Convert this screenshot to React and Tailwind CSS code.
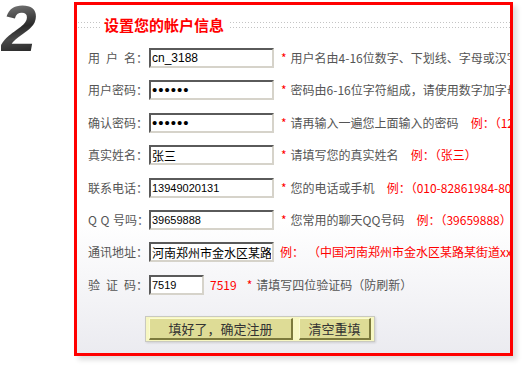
import React from 'react';

const cjk = "font-['Noto_Sans_CJK_SC',sans-serif]";
const inputBase =
  "h-[20px] shrink-0 bg-white border-2 border-t-[#5a5a5a] border-l-[#5a5a5a] border-r-[#d6d3ca] border-b-[#d6d3ca] px-[1px] text-black outline-none";

const Gap = () => <span className="inline-block w-[6px]" />;

const Star = () => <span className="ml-[7px] text-[#f00]">*</span>;

const Example = ({ children, className = 'ml-[12px]' }) => (
  <span className={`${className} text-[#f00]`}>{children}</span>
);

export default function App() {
  const rows = [
    {
      label: <>用<Gap />户<Gap />名：</>,
      input: <input className={`${inputBase} w-[125px] font-['Liberation_Sans',sans-serif] text-[12px]`} defaultValue="cn_3188" />,
      rest: (
        <>
          <Star />
          <span className="ml-[4px]">用户名由4-16位数字、下划线、字母或汉字组成</span>
        </>
      ),
    },
    {
      label: <>用户密码：</>,
      input: <input type="password" className={`${inputBase} w-[125px] font-['Liberation_Sans',sans-serif] text-[15px] tracking-[1px] text-[#0a1450]`} defaultValue="123456" />,
      rest: (
        <>
          <Star />
          <span className="ml-[4px]">密码由6-16位字符組成，请使用数字加字母组合</span>
        </>
      ),
    },
    {
      label: <>确认密码：</>,
      input: <input type="password" className={`${inputBase} w-[125px] font-['Liberation_Sans',sans-serif] text-[15px] tracking-[1px] text-[#0a1450]`} defaultValue="123456" />,
      rest: (
        <>
          <Star />
          <span className="ml-[4px]">请再输入一遍您上面输入的密码</span>
          <Example>例：（123456）</Example>
        </>
      ),
    },
    {
      label: <>真实姓名：</>,
      input: <input className={`${inputBase} w-[125px] ${cjk} text-[12px]`} defaultValue="张三" />,
      rest: (
        <>
          <Star />
          <span className="ml-[4px]">请填写您的真实姓名</span>
          <Example>例：（张三）</Example>
        </>
      ),
    },
    {
      label: <>联系电话：</>,
      input: <input className={`${inputBase} w-[125px] font-['Liberation_Sans',sans-serif] text-[11px]`} defaultValue="13949020131" />,
      rest: (
        <>
          <Star />
          <span className="ml-[4px]">您的电话或手机</span>
          <Example>例：（010-82861984-8001）</Example>
        </>
      ),
    },
    {
      label: <>Q<Gap />Q<Gap />号吗：</>,
      input: <input className={`${inputBase} w-[125px] font-['Liberation_Sans',sans-serif] text-[11px]`} defaultValue="39659888" />,
      rest: (
        <>
          <Star />
          <span className="ml-[4px]">您常用的聊天QQ号码</span>
          <Example>例：（39659888）</Example>
        </>
      ),
    },
    {
      label: <>通讯地址：</>,
      input: <input className={`${inputBase} w-[125px] ${cjk} text-[12px]`} defaultValue="河南郑州市金水区某路某街道xx号" />,
      rest: (
        <>
          <Example className="ml-[6px]">例：</Example>
          <Example className="ml-[4px]">（中国河南郑州市金水区某路某街道xx号）</Example>
        </>
      ),
    },
    {
      label: <>验<Gap />证<Gap />码：</>,
      input: <input className={`${inputBase} w-[55px] font-['Liberation_Sans',sans-serif] text-[11px]`} defaultValue="7519" />,
      rest: (
        <>
          <span className="ml-[6px] text-[#f00]">7519</span>
          <span className="ml-[10px] text-[#f00]">*</span>
          <span className="ml-[4px]">请填写四位验证码（防刷新）</span>
        </>
      ),
    },
  ];

  return (
    <div className={`w-[523px] h-[366px] bg-white flex ${cjk} text-[12px] text-[#555]`}>
      {/* big step number */}
      <div className="w-[74px] shrink-0">
        <div className="ml-[1px] pr-[14px] text-[64px] leading-[58px] font-black italic font-['Liberation_Sans',sans-serif] bg-[linear-gradient(170deg,#8a8a8a_0%,#2a2a2a_45%,#4a4a4a_62%,#111_100%)] bg-clip-text text-transparent w-fit">
          2
        </div>
      </div>

      {/* form panel */}
      <div className="mt-[2px] w-[439px] h-[354px] border-[3px] border-[#f00] bg-[linear-gradient(to_bottom,#fff_0%,#fff_62%,#ebebf0_100%)] shadow-[4px_4px_5px_rgba(0,0,0,0.13)] overflow-hidden">
        <div className="flex items-center mt-[10px] pl-[1px]">
          <div className="w-[22px] h-[6px] flex flex-col justify-between">
            <div className="h-px bg-[linear-gradient(to_right,#c4c4c4_1px,transparent_1px)] bg-[length:3px_1px]" />
            <div className="h-px bg-[linear-gradient(to_right,#c4c4c4_1px,transparent_1px)] bg-[length:3px_1px]" />
          </div>
          <div className="ml-[4px] text-[15px] leading-[20px] font-bold text-[#f00]">设置您的帐户信息</div>
          <div className="ml-[6px] flex-1 h-[6px] flex flex-col justify-between">
            <div className="h-px bg-[linear-gradient(to_right,#c4c4c4_1px,transparent_1px)] bg-[length:3px_1px]" />
            <div className="h-px bg-[linear-gradient(to_right,#c4c4c4_1px,transparent_1px)] bg-[length:3px_1px]" />
          </div>
        </div>

        <div className="mt-[13px] pl-[11px] flex flex-col gap-[12.4px]">
          {rows.map((r, i) => (
            <div key={i} className="flex items-center h-[20px] whitespace-nowrap">
              <div className="w-[61px] shrink-0 flex">{r.label}</div>
              {r.input}
              {r.rest}
            </div>
          ))}
        </div>

        <div className="mt-[21px] ml-[68px] w-fit flex gap-[6px] bg-[#f7f7c2] border border-[#c9c9c0] px-[3px] py-[1px] shadow-[1px_1px_2px_rgba(0,0,0,0.12)]">
          <button className="w-[144px] h-[22px] bg-[#dedc96] border-t border-l border-t-[#fbfbd2] border-l-[#fbfbd2] border-b-2 border-r-2 border-b-[#7c7a3c] border-r-[#7c7a3c] text-[13px] leading-none text-[#333]">
            填好了，确定注册
          </button>
          <button className="w-[72px] h-[22px] bg-[#dedc96] border-t border-l border-t-[#fbfbd2] border-l-[#fbfbd2] border-b-2 border-r-2 border-b-[#7c7a3c] border-r-[#7c7a3c] text-[13px] leading-none text-[#333]">
            清空重填
          </button>
        </div>
      </div>
    </div>
  );
}
